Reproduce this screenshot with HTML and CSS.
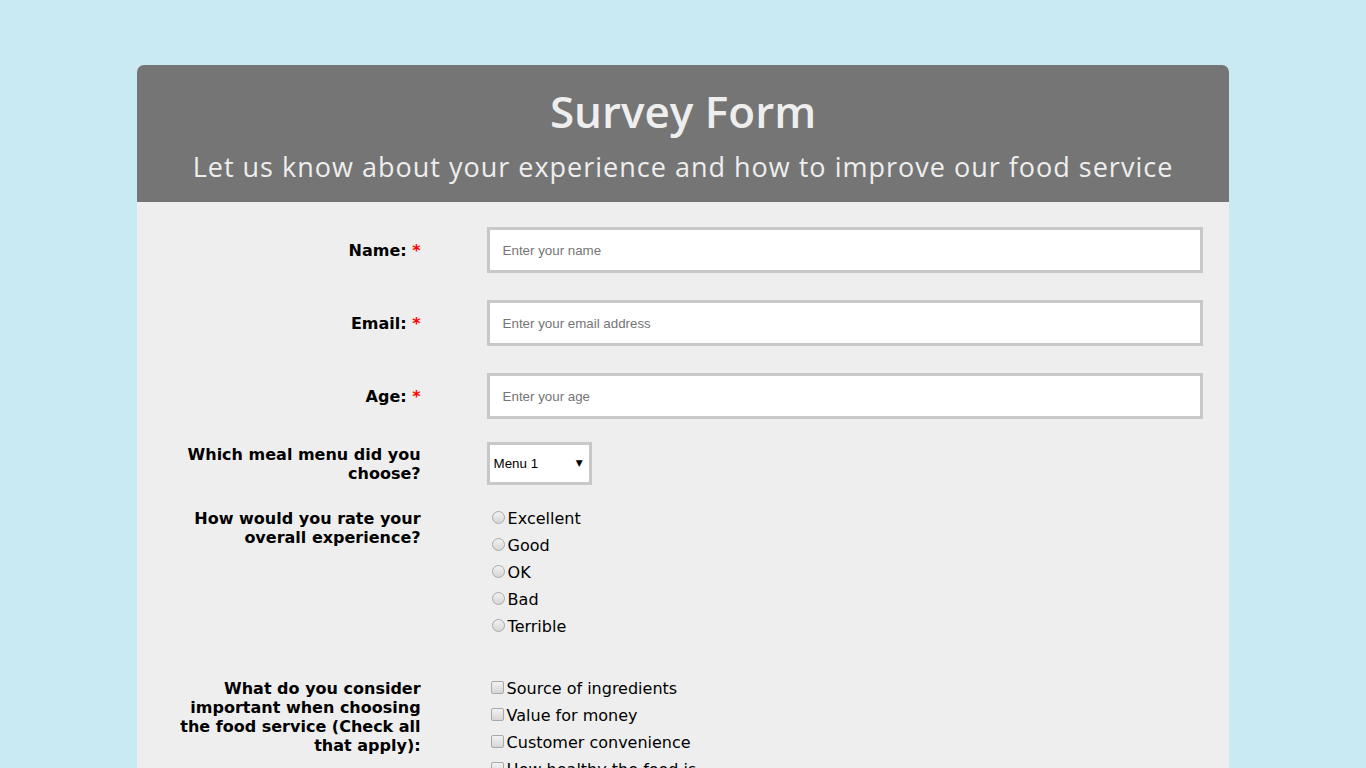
FILE: index.html
```html
<!DOCTYPE html>
<html lang="en">
<head>
<meta charset="utf-8">
<title>Survey Form</title>
<link rel="stylesheet" href="styles.css">
</head>
<body>
<div class="container">
  <header class="header">
    <h1 class="title">Survey Form</h1>
    <p class="description">Let us know about your experience and how to improve our food service</p>
  </header>
  <form class="survey">
    <div class="row row-text">
      <label class="label" for="name">Name: <span class="req">*</span></label>
      <input class="field" id="name" type="text" placeholder="Enter your name">
    </div>
    <div class="row row-text">
      <label class="label" for="email">Email: <span class="req">*</span></label>
      <input class="field" id="email" type="email" placeholder="Enter your email address">
    </div>
    <div class="row">
      <label class="label" for="age">Age: <span class="req">*</span></label>
      <input class="field" id="age" type="number" placeholder="Enter your age">
    </div>
    <div class="row row-select">
      <label class="label" for="menu">Which meal menu did you choose?</label>
      <div class="select-wrap">
        <select class="select" id="menu">
          <option>Menu 1</option>
          <option>Menu 2</option>
          <option>Menu 3</option>
        </select>
        <span class="arrow">&#9660;</span>
      </div>
    </div>
    <div class="row row-group row-radio">
      <div class="label">How would you rate your overall experience?</div>
      <div class="options">
        <label class="option"><input class="radio" type="radio" name="rate">Excellent</label>
        <label class="option"><input class="radio" type="radio" name="rate">Good</label>
        <label class="option"><input class="radio" type="radio" name="rate">OK</label>
        <label class="option"><input class="radio" type="radio" name="rate">Bad</label>
        <label class="option"><input class="radio" type="radio" name="rate">Terrible</label>
      </div>
    </div>
    <div class="row row-group">
      <div class="label">What do you consider important when choosing the food service (Check all that apply):</div>
      <div class="options">
        <label class="option"><input class="check" type="checkbox">Source of ingredients</label>
        <label class="option"><input class="check" type="checkbox">Value for money</label>
        <label class="option"><input class="check" type="checkbox">Customer convenience</label>
        <label class="option"><input class="check" type="checkbox">How healthy the food is</label>
        <label class="option"><input class="check" type="checkbox">Variety of dishes</label>
      </div>
    </div>
  </form>
</div>
</body>
</html>
```
FILE: styles.css
```css
html, body {
  margin: 0;
  padding: 0;
}
body {
  background: #c9eaf2;
  font-family: "DejaVu Sans", Verdana, sans-serif;
  font-size: 16px;
  color: #000;
}
.container {
  width: 80%;
  margin: 65px auto 0;
  background: #eeeeee;
  border-radius: 7px 7px 0 0;
  overflow: hidden;
}
.header {
  background: #757575;
  color: #eeeeee;
  text-align: center;
  height: 137px;
  box-sizing: border-box;
  padding-top: 21px;
  font-family: "Open Sans", sans-serif;
}
.title {
  margin: 0;
  font-size: 44px;
  font-weight: 600;
  line-height: 50px;
}
.description {
  margin: 13px 0 0;
  font-size: 27px;
  letter-spacing: 1px;
  font-weight: 400;
  line-height: 36px;
}
.survey {
  padding: 25px 26px 40px 24px;
}
.row {
  display: grid;
  grid-template-columns: 260px 1fr;
  column-gap: 66px;
  align-items: center;
  margin-bottom: 23px;
}
.row-text {
  margin-bottom: 27px;
}
.row-group {
  align-items: start;
}
.row-radio {
  margin-bottom: 42px;
}
.label {
  text-align: right;
  font-weight: bold;
  line-height: 19px;
  padding-top: 1px;
}
.req {
  color: #ff0000;
}
.field {
  height: 46px;
  box-sizing: border-box;
  border: 3px solid #c8c8c8;
  background: #fff;
  padding: 0 13px;
  font-family: "Liberation Sans", Arial, sans-serif;
  font-size: 13.33px;
  width: 100%;
  margin: 0;
  outline: none;
}
.field::placeholder {
  color: #757575;
}
.select-wrap {
  position: relative;
  width: 105px;
  height: 43px;
}
.select {
  appearance: none;
  -webkit-appearance: none;
  width: 105px;
  height: 43px;
  box-sizing: border-box;
  border: 3px solid #c8c8c8;
  border-radius: 0;
  background: #fff;
  padding: 0 0 0 4px;
  margin: 0;
  font-family: "Liberation Sans", Arial, sans-serif;
  font-size: 13.33px;
  color: #000;
  outline: none;
}
.arrow {
  position: absolute;
  right: 9px;
  top: 16px;
  font-size: 9px;
  line-height: 10px;
  pointer-events: none;
  color: #000;
}
.options {
  display: flex;
  flex-direction: column;
  gap: 8px;
  padding-top: 1px;
}
.option {
  display: flex;
  align-items: center;
  height: 19px;
  line-height: 19px;
  font-weight: normal;
}
.radio {
  appearance: none;
  -webkit-appearance: none;
  width: 13px;
  height: 13px;
  margin: 0 3px 2px 5px;
  border: 1px solid #a9a9a9;
  border-radius: 50%;
  box-sizing: border-box;
  background: linear-gradient(#f2f2f2, #d6d6d6);
  flex: none;
}
.check {
  appearance: none;
  -webkit-appearance: none;
  width: 13px;
  height: 13px;
  margin: 0 3px 2px 4px;
  border: 1px solid #a9a9a9;
  border-radius: 2px;
  box-sizing: border-box;
  background: linear-gradient(#f2f2f2, #d6d6d6);
  flex: none;
}
```
